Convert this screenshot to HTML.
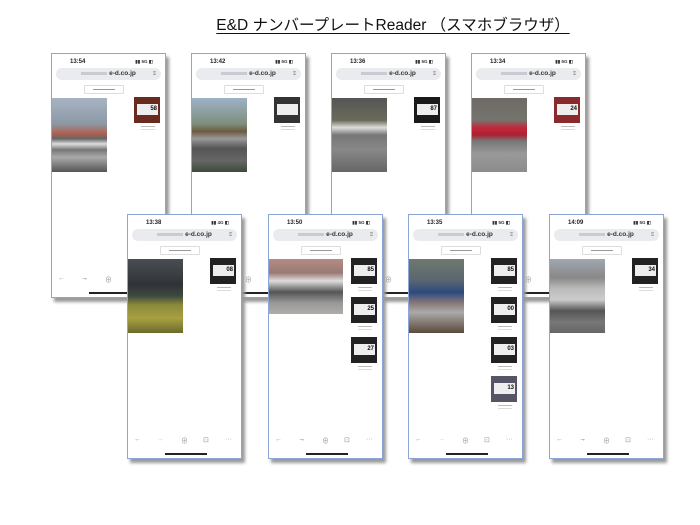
<!DOCTYPE html>
<html><head><meta charset="utf-8"><style>
*{margin:0;padding:0;box-sizing:border-box}
body{width:700px;height:525px;background:#fff;position:relative;overflow:hidden;font-family:"Liberation Sans","Noto Sans CJK JP",sans-serif}
.title{position:absolute;left:0;width:700px;top:13px;text-align:center;font-size:15.5px;color:#111;}
.title span{text-decoration:underline;text-underline-offset:3px;margin-left:86px}
.ph{position:absolute;width:115px;height:245px;background:#fff;border:1.5px solid #8aa5d6;box-shadow:3px 4px 3px #9a9a9a}
.tm{position:absolute;left:18px;top:5px;font-size:6px;font-weight:bold;color:#222}
.st{position:absolute;right:12px;top:5px;font-size:4.5px;font-weight:bold;color:#333}
.url{position:absolute;left:4px;right:4px;top:14px;height:12px;border-radius:6px;background:#e9ebee;font-size:6.5px;font-weight:bold;text-align:center;line-height:12px;color:#333}
.url i{display:inline-block;width:26px;height:3px;background:#c9cbd0;margin-right:2px;vertical-align:middle}
.url b{position:absolute;right:5px;top:0;font-weight:normal;color:#777;font-size:5px}
.btn{position:absolute;left:32px;top:31px;width:40px;height:9px;border:1px solid #ddd;border-radius:1px}
.btn:after{content:"";position:absolute;left:8px;top:3px;width:22px;height:1px;background:#999}
.photo{position:absolute;left:0;top:44px;width:55px;height:74px}
.pl{position:absolute;right:5px;width:26px;height:26px;background:#222;}
.pl:before{content:attr(data-n);position:absolute;left:3px;top:7px;width:20px;height:11px;background:#eee;font-size:6px;font-weight:bold;color:#111;text-align:right;padding-right:1px;line-height:11px}
.cap{position:absolute;right:10px;width:14px;height:4px;border-top:1px solid #bbb;border-bottom:1px solid #ddd}
.tb{position:absolute;left:0;right:0;bottom:10px;height:12px;font-size:7px;color:#999}
.tb span{position:absolute;top:0}
.hb{position:absolute;left:37px;width:42px;height:2px;background:#222;bottom:3px}
</style></head><body>
<div class="title"><span>E&amp;D ナンバープレートReader （スマホブラウザ）</span></div>

<div class="ph" style="left:51px;top:53px">
 <div class="tm">13:54</div><div class="st">▮▮ 5G ◧</div>
 <div class="url"><i></i>e-d.co.jp<b>⍐</b></div><div class="btn"></div>
 <div class="photo" style="background:linear-gradient(180deg,#a8b4c4 0%,#8d98a5 35%,#b06050 48%,#666 55%,#ddd 62%,#777 70%,#aaa 80%,#555 100%)"></div>
 <div class="pl" style="top:43px;background:#6b2a20" data-n="58"></div><div class="cap" style="top:72px"></div>
 <div class="tb"><span style="left:6px">←</span><span style="left:29px;color:#555">→</span><span style="left:53px">⊕</span></div><div class="hb"></div>
</div>
<div class="ph" style="left:191px;top:53px">
 <div class="tm">13:42</div><div class="st">▮▮ 5G ◧</div>
 <div class="url"><i></i>e-d.co.jp<b>⍐</b></div><div class="btn"></div>
 <div class="photo" style="background:linear-gradient(180deg,#9fb2c6 0%,#7e8e7c 35%,#6a5a40 45%,#999 55%,#555 68%,#666 85%,#3c4a3a 100%)"></div>
 <div class="pl" style="top:43px;background:#333" data-n=""></div><div class="cap" style="top:72px"></div>
 <div class="tb"><span style="left:6px">←</span><span style="left:29px;color:#555">→</span><span style="left:53px">⊕</span></div><div class="hb"></div>
</div>
<div class="ph" style="left:331px;top:53px">
 <div class="tm">13:36</div><div class="st">▮▮ 5G ◧</div>
 <div class="url"><i></i>e-d.co.jp<b>⍐</b></div><div class="btn"></div>
 <div class="photo" style="background:linear-gradient(180deg,#555 0%,#6a6a5a 30%,#ddd 40%,#777 50%,#888 70%,#666 100%)"></div>
 <div class="pl" style="top:43px;background:#1a1a1a" data-n="87"></div><div class="cap" style="top:72px"></div>
 <div class="tb"><span style="left:6px">←</span><span style="left:29px;color:#555">→</span><span style="left:53px">⊕</span></div><div class="hb"></div>
</div>
<div class="ph" style="left:471px;top:53px">
 <div class="tm">13:34</div><div class="st">▮▮ 5G ◧</div>
 <div class="url"><i></i>e-d.co.jp<b>⍐</b></div><div class="btn"></div>
 <div class="photo" style="background:linear-gradient(180deg,#6d6a66 0%,#77736d 30%,#c2283a 40%,#a23 50%,#777 58%,#999 75%,#8c8c8c 100%)"></div>
 <div class="pl" style="top:43px;background:#8a2a2a" data-n="24"></div><div class="cap" style="top:72px"></div>
 <div class="tb"><span style="left:6px">←</span><span style="left:29px;color:#555">→</span><span style="left:53px">⊕</span></div><div class="hb"></div>
</div>

<div class="ph" style="left:127px;top:214px">
 <div class="tm">13:38</div><div class="st">▮▮ 4G ◧</div>
 <div class="url"><i></i>e-d.co.jp<b>⍐</b></div><div class="btn"></div>
 <div class="photo" style="background:linear-gradient(180deg,#4a4e52 0%,#2f3338 35%,#3d4a3f 50%,#8a8a3a 62%,#a8a040 80%,#6c6a2c 100%)"></div>
 <div class="pl" style="top:43px" data-n="08"></div><div class="cap" style="top:72px"></div>
 <div class="tb"><span style="left:6px">←</span><span style="left:29px;color:#ccc">→</span><span style="left:53px">⊕</span><span style="left:75px">⊡</span><span style="left:97px">···</span></div><div class="hb"></div>
</div>
<div class="ph" style="left:268px;top:214px">
 <div class="tm">13:50</div><div class="st">▮▮ 5G ◧</div>
 <div class="url"><i></i>e-d.co.jp<b>⍐</b></div><div class="btn"></div>
 <div class="photo" style="width:74px;height:55px;background:linear-gradient(180deg,#b48c84 0%,#9a7a74 25%,#ddd 40%,#555 60%,#999 80%,#b0aca8 100%)"></div>
 <div class="pl" style="top:43px" data-n="85"></div><div class="cap" style="top:72px"></div>
 <div class="pl" style="top:82px" data-n="25"></div><div class="cap" style="top:111px"></div>
 <div class="pl" style="top:122px;background:#222" data-n="27"></div><div class="cap" style="top:151px"></div>
 <div class="tb"><span style="left:6px">←</span><span style="left:29px;color:#555">→</span><span style="left:53px">⊕</span><span style="left:75px">⊡</span><span style="left:97px">···</span></div><div class="hb"></div>
</div>
<div class="ph" style="left:408px;top:214px">
 <div class="tm">13:35</div><div class="st">▮▮ 5G ◧</div>
 <div class="url"><i></i>e-d.co.jp<b>⍐</b></div><div class="btn"></div>
 <div class="photo" style="background:linear-gradient(180deg,#6e7a70 0%,#5a6470 30%,#2c4a80 45%,#8a7a7a 60%,#aaa 72%,#5a4a3a 100%)"></div>
 <div class="pl" style="top:43px" data-n="85"></div><div class="cap" style="top:72px"></div>
 <div class="pl" style="top:82px" data-n="00"></div><div class="cap" style="top:111px"></div>
 <div class="pl" style="top:122px" data-n="03"></div><div class="cap" style="top:151px"></div>
 <div class="pl" style="top:161px;background:#556" data-n="13"></div><div class="cap" style="top:190px"></div>
 <div class="tb"><span style="left:6px">←</span><span style="left:29px;color:#ccc">→</span><span style="left:53px">⊕</span><span style="left:75px">⊡</span><span style="left:97px">···</span></div><div class="hb"></div>
</div>
<div class="ph" style="left:549px;top:214px">
 <div class="tm">14:09</div><div class="st">▮▮ 5G ◧</div>
 <div class="url"><i></i>e-d.co.jp<b>⍐</b></div><div class="btn"></div>
 <div class="photo" style="background:linear-gradient(180deg,#a0a8b0 0%,#888 25%,#bbb 40%,#ccc 55%,#555 70%,#777 85%,#666 100%)"></div>
 <div class="pl" style="top:43px" data-n="34"></div><div class="cap" style="top:72px"></div>
 <div class="tb"><span style="left:6px">←</span><span style="left:29px;color:#555">→</span><span style="left:53px">⊕</span><span style="left:75px">⊡</span><span style="left:97px">···</span></div><div class="hb"></div>
</div>
</body></html>
